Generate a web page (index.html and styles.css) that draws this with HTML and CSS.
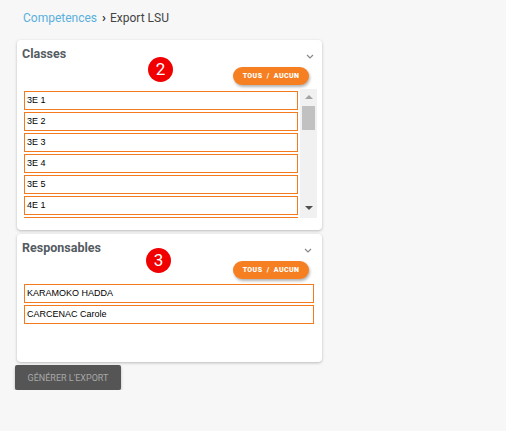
FILE: index.html
```html
<!DOCTYPE html>
<html>
<head>
<meta charset="utf-8">
<link rel="stylesheet" href="styles.css">
</head>
<body>
<div class="page">
  <div class="breadcrumb"><a class="crumb-link">Competences</a><span class="sep">›</span><span class="crumb-current">Export LSU</span></div>

  <section class="card card-classes">
    <div class="card-head">
      <h2 class="card-title">Classes</h2>
      <svg class="chevron" width="8" height="5" viewBox="0 0 8 5"><path d="M1 1 L4 4 L7 1" fill="none" stroke="#888" stroke-width="1.2"/></svg>
    </div>
    <span class="marker marker-2">2</span>
    <div class="btn-row"><button class="pill">TOUS &nbsp;/&nbsp; AUCUN</button></div>
    <div class="list-wrap">
      <div class="list">
        <div class="item">3E 1</div>
        <div class="item">3E 2</div>
        <div class="item">3E 3</div>
        <div class="item">3E 4</div>
        <div class="item">3E 5</div>
        <div class="item">4E 1</div>
        <div class="item item-partial"></div>
      </div>
      <div class="scrollbar">
        <span class="arrow-up"></span>
        <span class="thumb"></span>
        <span class="track"></span>
        <span class="arrow-down"></span>
      </div>
    </div>
  </section>

  <section class="card card-resp">
    <div class="card-head">
      <h2 class="card-title">Responsables</h2>
      <svg class="chevron" width="8" height="5" viewBox="0 0 8 5"><path d="M1 1 L4 4 L7 1" fill="none" stroke="#888" stroke-width="1.2"/></svg>
    </div>
    <span class="marker marker-3">3</span>
    <div class="btn-row"><button class="pill">TOUS &nbsp;/&nbsp; AUCUN</button></div>
    <div class="list list-resp">
      <div class="item">KARAMOKO HADDA</div>
      <div class="item">CARCENAC Carole</div>
    </div>
  </section>

  <button class="export">GÉNÉRER L'EXPORT</button>
</div>
</body>
</html>
```

FILE: styles.css
```css
html, body {
  margin: 0;
  padding: 0;
  background: #f7f7f7;
  font-family: Roboto, "Liberation Sans", sans-serif;
}
.page {
  padding: 10px 0 0 17px;
  width: 305px;
}
.breadcrumb {
  height: 16px;
  line-height: 16px;
  font-size: 12px;
  padding-left: 6px;
  color: #444;
  display: flex;
  align-items: center;
}
.crumb-link {
  color: #5ab0dd;
}
.sep {
  margin: 0 4px 0 5px;
  font-size: 13px;
  color: #333;
  font-weight: bold;
}
.crumb-current {
  color: #444;
}
.card {
  position: relative;
  background: #fff;
  border-radius: 4px;
  box-shadow: 0 1px 3px rgba(0,0,0,0.25);
  box-sizing: border-box;
}
.card-classes {
  margin-top: 14px;
  height: 190px;
  padding: 6px 5px 0 6px;
}
.card-resp {
  margin-top: 4px;
  height: 128px;
  padding: 6px 7px 0 6px;
}
.card-head {
  display: flex;
  justify-content: space-between;
  align-items: center;
  height: 16px;
  margin-left: -1px;
}
.card-title {
  margin: 0;
  font-size: 12.5px;
  font-weight: bold;
  color: #555b62;
  line-height: 16px;
}
.chevron {
  margin-top: 4px;
  margin-right: 3px;
}
.marker {
  position: absolute;
  width: 25px;
  height: 25px;
  border-radius: 50%;
  background: #f00000;
  color: #fff;
  font-size: 17px;
  line-height: 25px;
  text-align: center;
}
.marker-2 { left: 131px; top: 17px; }
.marker-3 { left: 129px; top: 14px; }
.btn-row {
  display: flex;
  justify-content: flex-end;
  padding-right: 8px;
  margin-top: 5px;
}
.card-resp .btn-row { padding-right: 6px; }
.pill {
  height: 18px;
  width: 76px;
  border: none;
  border-radius: 9px;
  background: #f67f21;
  color: #fff;
  font-family: Roboto, sans-serif;
  font-weight: 900;
  font-size: 7px;
  letter-spacing: 0.4px;
  padding: 0;
  box-shadow: 1px 2px 3px rgba(0,0,0,0.3);
}
.list-wrap {
  display: flex;
  margin-top: 4px;
  height: 129px;
  overflow: hidden;
}
.list {
  flex: 1;
  display: flex;
  flex-direction: column;
  gap: 2px;
  padding: 2px 1px 0 1px;
  overflow: hidden;
}
.list-resp {
  padding-top: 0;
  margin-top: 5px;
}
.item {
  flex: none;
  height: 19px;
  box-sizing: border-box;
  border: 1px solid #f47a20;
  font-family: "Liberation Sans", Arial, sans-serif;
  font-size: 9px;
  line-height: 17px;
  padding-left: 2px;
  color: #000;
}
.card-classes .list { padding-right: 2px; }
.scrollbar {
  width: 17px;
  background: #f1f1f1;
  display: flex;
  flex-direction: column;
  align-items: center;
}
.arrow-up {
  margin-top: 6px;
  width: 0;
  height: 0;
  border-left: 4px solid transparent;
  border-right: 4px solid transparent;
  border-bottom: 4px solid #a3a3a3;
}
.thumb {
  margin-top: 7px;
  width: 13px;
  height: 24px;
  background: #c1c1c1;
}
.track { flex: 1; }
.arrow-down {
  margin-bottom: 8px;
  width: 0;
  height: 0;
  border-left: 4px solid transparent;
  border-right: 4px solid transparent;
  border-top: 4px solid #505050;
}
.export {
  margin: 3px 0 0 -2px;
  width: 106px;
  height: 25px;
  border: none;
  border-radius: 2px;
  background: #555555;
  color: #a8a8a8;
  font-family: Roboto, sans-serif;
  font-size: 9px;
  padding: 0;
  box-shadow: 0 2px 3px rgba(0,0,0,0.25);
}
```
